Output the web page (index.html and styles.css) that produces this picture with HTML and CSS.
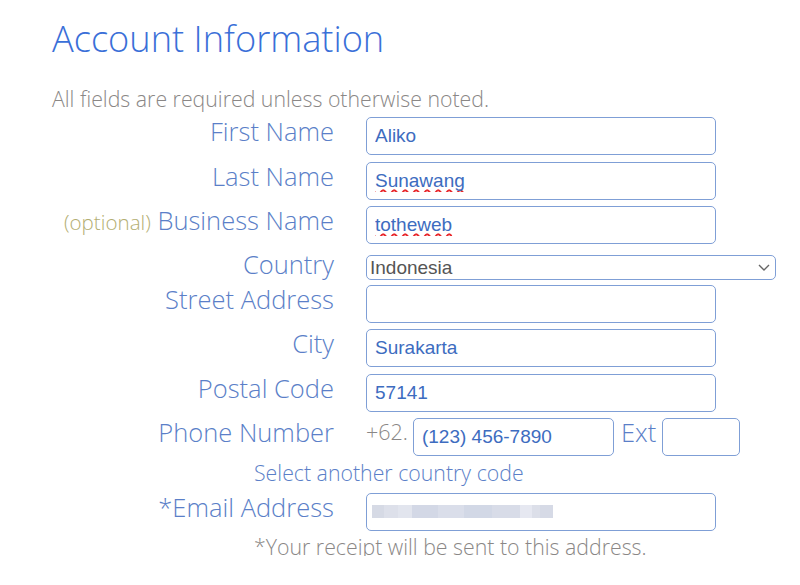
FILE: index.html
```html
<!DOCTYPE html>
<html lang="en">
<head>
  <meta charset="UTF-8" />
  <title>Account Information</title>
  <link rel="stylesheet" href="styles.css">
</head>
<body>
  <div class="account">
    <h1>Account Information</h1>
    <p class="note">All fields are required unless otherwise noted.</p>

    <div class="row">
      <label class="label" for="firstName">First Name</label>
      <input class="field" type="text" id="firstName" value="Aliko">
    </div>
    <div class="row">
      <label class="label" for="lastName">Last Name</label>
      <input class="field typo" type="text" id="lastName" value="Sunawang">
    </div>
    <div class="row">
      <label class="label" for="business"><span class="optional">(optional)</span> Business Name</label>
      <input class="field typo" type="text" id="business" value="totheweb">
    </div>
    <div class="row row-country">
      <label class="label" for="country">Country</label>
      <div class="select-wrap">
        <select class="country" id="country">
          <option>Indonesia</option>
        </select>
        <svg class="chevron" width="12" height="7" viewBox="0 0 12 7">
          <path d="M1 1l5 5 5-5" fill="none" stroke="#666" stroke-width="1.4"/>
        </svg>
      </div>
    </div>
    <div class="row">
      <label class="label" for="street">Street Address</label>
      <input class="field" type="text" id="street" value="">
    </div>
    <div class="row">
      <label class="label" for="city">City</label>
      <input class="field" type="text" id="city" value="Surakarta">
    </div>
    <div class="row">
      <label class="label" for="postal">Postal Code</label>
      <input class="field" type="text" id="postal" value="57141">
    </div>
    <div class="row">
      <label class="label" for="phone">Phone Number</label>
      <div class="phone">
        <span class="prefix">+62.</span>
        <input class="field phone-number" type="text" id="phone" value="(123) 456-7890">
        <label class="ext-label" for="ext">Ext</label>
        <input class="field ext" type="text" id="ext" value="">
      </div>
    </div>
    <p class="hint">Select another country code</p>
    <div class="row">
      <label class="label" for="email">*Email Address</label>
      <input class="field email" type="text" id="email" value="">
    </div>
    <p class="receipt">*Your receipt will be sent to this address.</p>
  </div>
</body>
</html>
```

FILE: styles.css
```css
body {
  margin: 0;
  font-family: "Open Sans", "Liberation Sans", sans-serif;
  font-weight: 300;
  background: #fff;
}

.account {
  padding-left: 52px;
}

h1 {
  margin: 13.5px 0 0;
  font-size: 36.2px;
  font-weight: 300;
  color: #3a6fd8;
  line-height: 49px;
}

.note {
  margin: 21.4px 0 4.4px;
  font-size: 21.3px;
  line-height: 29px;
  color: #8a8786;
}

.row {
  display: flex;
  align-items: flex-start;
  gap: 32px;
  margin-bottom: 6.4px;
}

.row-country {
  margin-bottom: 4.3px;
}

.label {
  width: 282px;
  flex: none;
  text-align: right;
  font-size: 25.5px;
  line-height: 28px;
  color: #5b7fc8;
}

.optional {
  font-size: 20.6px;
  color: #b3ae72;
}

.field {
  width: 350px;
  height: 38px;
  box-sizing: border-box;
  border: 1px solid #7f9fd6;
  border-radius: 5px;
  padding: 0 8px;
  font-family: "Liberation Sans", Arial, sans-serif;
  font-size: 19px;
  color: #3d6cc0;
  outline: none;
}

.typo {
  text-decoration: underline wavy #e8262a;
  text-decoration-thickness: 1.5px;
  text-underline-offset: 2px;
  text-decoration-skip-ink: none;
}

.select-wrap {
  position: relative;
  margin-top: 5px;
}

.country {
  display: block;
  width: 410px;
  height: 25px;
  box-sizing: border-box;
  border: 1px solid #7f9fd6;
  border-radius: 5px;
  padding: 0 3px;
  background: #fff;
  appearance: none;
  font-family: "Liberation Sans", Arial, sans-serif;
  font-size: 19px;
  color: #555;
}

.chevron {
  position: absolute;
  right: 6px;
  top: 9px;
  pointer-events: none;
}

.phone {
  display: flex;
  align-items: flex-start;
}

.prefix {
  font-size: 21.5px;
  line-height: 28px;
  color: #8a8786;
  margin-right: 5px;
}

.phone-number {
  width: 201px;
}

.ext-label {
  font-size: 25.5px;
  line-height: 28px;
  color: #5b7fc8;
  margin: 0 6px 0 7px;
}

.ext {
  width: 78px;
}

.email {
  background-image: linear-gradient(to right,
    #d6dae5 0 12px, #dde0ea 12px 26px, #e2e5ee 26px 40px, #d3d8e6 40px 66px,
    #dadeea 66px 92px, #d2d8e6 92px 120px, #d8dce8 120px 148px,
    #e6e8f1 148px 160px, #dcdfe9 160px 168px, #d6dae6 168px 181px);
  background-repeat: no-repeat;
  background-size: 181px 13px;
  background-position: 5px 11px;
}

.hint {
  margin: 0 0 9px 202px;
  font-size: 21.3px;
  line-height: 22px;
  color: #5b7fc8;
}

.receipt {
  margin: 0 0 0 202px;
  font-size: 21.3px;
  line-height: 18px;
  color: #8a8786;
}
```
